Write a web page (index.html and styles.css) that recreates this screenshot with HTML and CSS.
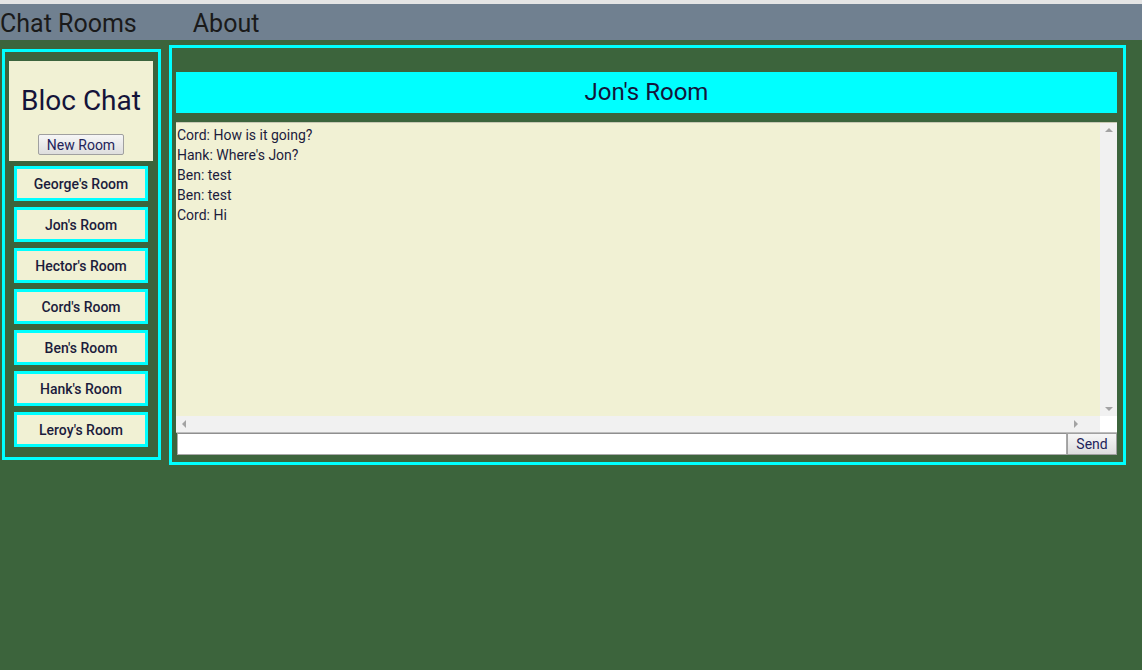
FILE: index.html
```html
<!DOCTYPE html>
<html lang="en">
<head>
    <meta charset="UTF-8">
    <meta name="viewport" content="width=device-width, initial-scale=1.0">
    <link rel="stylesheet" href="styles.css">
    <title>Bloc Chat</title>
</head>
<body>
    <div class="topbar">
        <a class="navlink">Chat Rooms</a>
        <a class="navlink about">About</a>
    </div>
    <div class="main-container">
        <div class="sidebar">
            <div class="brand">
                <h1>Bloc Chat</h1>
                <button class="newroom">New Room</button>
            </div>
            <div class="room">George's Room</div>
            <div class="room">Jon's Room</div>
            <div class="room">Hector's Room</div>
            <div class="room">Cord's Room</div>
            <div class="room">Ben's Room</div>
            <div class="room">Hank's Room</div>
            <div class="room">Leroy's Room</div>
        </div>
        <div class="chat">
            <h2 class="roomtitle">Jon's Room</h2>
            <div class="messages">
                <div class="msgbody">
                    <div class="msglist">
                        <div class="msg">Cord: How is it going?</div>
                        <div class="msg">Hank: Where's Jon?</div>
                        <div class="msg">Ben: test</div>
                        <div class="msg">Ben: test</div>
                        <div class="msg">Cord: Hi</div>
                    </div>
                    <div class="vscroll">
                        <span class="arrow up"></span>
                        <span class="arrow down"></span>
                    </div>
                </div>
                <div class="hscroll">
                    <div class="htrack">
                        <span class="arrow left"></span>
                        <span class="arrow right"></span>
                    </div>
                    <div class="corner"></div>
                </div>
            </div>
            <div class="sendrow">
                <input type="text" class="msginput">
                <button class="sendbutton">Send</button>
            </div>
        </div>
    </div>
</body>
</html>
```

FILE: styles.css
```css
*{
    margin:0px;
    padding:0px;
    box-sizing: border-box;
}
html, body{
    height: 100%;
}
body{
    background-color: #3c643c;
    font-family: Roboto, "Liberation Sans", sans-serif;
    color: #1c1c3c;
}
.topbar{
    height: 40px;
    background-color: #708090;
    display: flex;
    align-items: center;
    border-top: 4px solid #e4e4e4;
    padding-top: 2px;
}
.navlink{
    font-size: 25px;
    color: #1a1a1a;
    margin-right: 56px;
}
.main-container{
    display: flex;
    flex-direction: row;
    align-items: flex-start;
    padding-left: 2px;
}
.sidebar{
    width: 159px;
    margin-top: 9px;
    border: 3px solid cyan;
    padding: 9px 0px 10px 0px;
}
.brand{
    width: 144px;
    height: 100px;
    margin-left: 4px;
    margin-bottom: 5px;
    background-color: #f1f1d4;
    text-align: center;
    padding-top: 24px;
}
.brand h1{
    font-size: 28px;
    font-weight: normal;
    color: #14143a;
    line-height: 32px;
}
.newroom{
    margin-top: 17px;
    width: 86px;
    height: 21px;
    font-family: Roboto, "Liberation Sans", sans-serif;
    font-size: 14px;
    color: #23235a;
    border: 1px solid #a0a0a0;
    border-radius: 2px;
    background: linear-gradient(#f6f6f6, #dedede);
}
.room{
    width: 134px;
    height: 35px;
    margin-left: 9px;
    margin-bottom: 6px;
    border: 3px solid cyan;
    background-color: #f1f1d4;
    font-size: 14px;
    font-weight: 500;
    color: #1c1c3c;
    display: flex;
    align-items: center;
    justify-content: center;
}
.room:last-child{
    margin-bottom: 0px;
}
.chat{
    width: 957px;
    height: 420px;
    margin-top: 5px;
    margin-left: 8px;
    border: 3px solid cyan;
    padding: 24px 6px 7px 4px;
    display: flex;
    flex-direction: column;
}
.roomtitle{
    height: 41px;
    background-color: cyan;
    font-size: 24px;
    font-weight: normal;
    text-align: center;
    line-height: 41px;
    color: #14143a;
}
.messages{
    margin-top: 9px;
    height: 311px;
    display: flex;
    flex-direction: column;
    border-top: 1px solid #c8c8b4;
}
.msgbody{
    flex: 1;
    display: flex;
}
.msglist{
    flex: 1;
    background-color: #f1f1d4;
    font-size: 14px;
    line-height: 20px;
    padding-top: 2px;
    padding-left: 1px;
}
.vscroll{
    width: 17px;
    background-color: #f1f1f1;
    display: flex;
    flex-direction: column;
    justify-content: space-between;
    align-items: center;
    padding: 5px 0px 5px 0px;
}
.hscroll{
    height: 17px;
    display: flex;
    border-bottom: 1px solid #bdbdbd;
}
.htrack{
    flex: 1;
    background-color: #f1f1f1;
    display: flex;
    justify-content: space-between;
    align-items: center;
    padding: 0px 22px 0px 6px;
}
.corner{
    width: 17px;
    background-color: white;
}
.arrow{
    width: 0px;
    height: 0px;
    border: 4px solid transparent;
}
.arrow.up{
    border-bottom-color: #a3a3a3;
    border-top-width: 0px;
}
.arrow.down{
    border-top-color: #a3a3a3;
    border-bottom-width: 0px;
}
.arrow.left{
    border-right-color: #a3a3a3;
    border-left-width: 0px;
}
.arrow.right{
    border-left-color: #a3a3a3;
    border-right-width: 0px;
}
.sendrow{
    display: flex;
    height: 22px;
}
.msginput{
    flex: 1;
    margin-left: 1px;
    border: 1px solid #a9a9a9;
    border-top-color: #8f8f8f;
    background-color: white;
}
.sendbutton{
    width: 50px;
    font-family: Roboto, "Liberation Sans", sans-serif;
    font-size: 14px;
    color: #23235a;
    border: 1px solid #a0a0a0;
    background: linear-gradient(#f6f6f6, #dedede);
}
```
